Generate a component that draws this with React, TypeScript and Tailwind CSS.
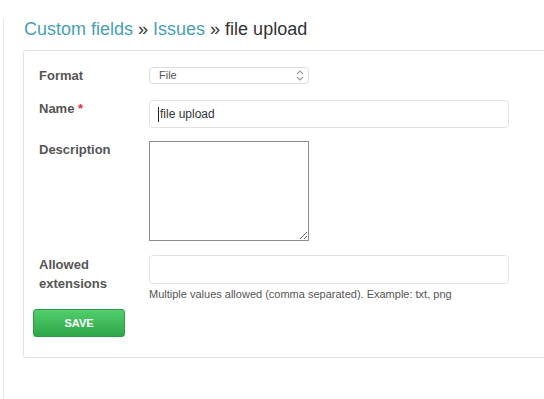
import React from "react";

function Chevrons() {
  return (
    <svg width="8" height="11" viewBox="0 0 8 11" fill="none" stroke="#9a9a9a" strokeWidth="1.1">
      <path d="M1 4 L4 1 L7 4" />
      <path d="M1 7 L4 10 L7 7" />
    </svg>
  );
}

export default function App() {
  return (
    <div className="h-[399px] w-[544px] overflow-hidden bg-white font-['Liberation_Sans',Arial,sans-serif]">
      <div className="ml-[3px] mt-[18px] h-[400px] border-l border-[#e6e6e6] pl-[19px] pt-px">
        <h2 className="pl-px text-[18px] leading-[20px] text-[#333]">
          <a className="text-[#489fb6]">Custom fields</a> » <a className="text-[#489fb6]">Issues</a> » file upload
        </h2>

        <form className="mt-[11px] w-[600px] rounded-[3px] border border-[#e3e3e3] pb-[20px] pl-[9px] pt-[16px]">
          <div className="flex flex-col pl-[6px]">
            <div className="flex">
              <label className="w-[110px] text-[13px] font-bold leading-[17px] text-[#555]">Format</label>
              <div className="flex h-[17px] w-[160px] items-center justify-between rounded-[4px] border border-[#dcdcdc] bg-white pl-[9px] pr-[4px]">
                <span className="text-[11px] leading-[13px] text-[#555]">File</span>
                <Chevrons />
              </div>
            </div>

            <div className="mt-[16px] flex">
              <label className="w-[110px] text-[13px] font-bold leading-[17px] text-[#555]">
                Name <span className="text-[#d33]">*</span>
              </label>
              <div className="relative">
                <input
                  defaultValue="file upload"
                  className="h-[28px] w-[360px] rounded-[4px] border border-[#e3e3e3] pl-[10px] text-[12px] text-[#333] outline-none"
                />
                <span className="absolute left-[9px] top-[7px] h-[15px] w-px bg-[#222]" />
              </div>
            </div>

            <div className="mt-[13px] flex">
              <label className="w-[110px] text-[13px] font-bold leading-[17px] text-[#555]">Description</label>
              <textarea className="h-[100px] w-[160px] resize border border-[#8d8d8d] outline-none" />
            </div>

            <div className="mt-[14px] flex">
              <label className="w-[110px] text-[13px] font-bold leading-[19px] text-[#555]">
                Allowed
                <br />
                extensions
              </label>
              <div className="flex flex-col">
                <input className="h-[29px] w-[360px] rounded-[4px] border border-[#e3e3e3] outline-none" />
                <p className="mt-[3px] text-[11px] leading-[14px] text-[#555]">
                  Multiple values allowed (comma separated). Example: txt, png
                </p>
              </div>
            </div>
          </div>

          <button
            type="button"
            className="mt-[8px] h-[28px] w-[92px] rounded-[3px] border border-[#2a9c43] bg-gradient-to-b from-[#52cd6c] to-[#2ca748] text-[11px] font-bold text-white"
          >
            SAVE
          </button>
        </form>
      </div>
    </div>
  );
}
